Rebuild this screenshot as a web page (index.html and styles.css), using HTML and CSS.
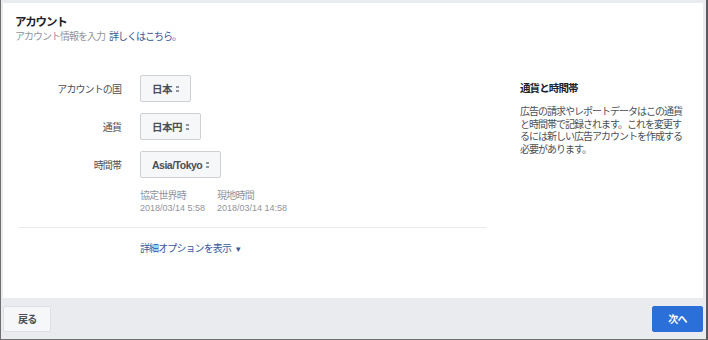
FILE: index.html
```html
<!DOCTYPE html>
<html>
<head>
    <link rel="stylesheet" href="styles.css">
</head>
<body>
    <div class="window">
        <div class="panel">
            <div class="header">
                <h1>アカウント</h1>
                <p class="sub">アカウント情報を入力<a href="#">詳しくはこちら。</a></p>
            </div>
            <div class="main">
                <div class="form">
                    <div class="row">
                        <span class="label">アカウントの国</span>
                        <button class="select">日本<span class="caret"></span></button>
                    </div>
                    <div class="row">
                        <span class="label">通貨</span>
                        <button class="select">日本円<span class="caret"></span></button>
                    </div>
                    <div class="row">
                        <span class="label">時間帯</span>
                        <button class="select">Asia/Tokyo<span class="caret"></span></button>
                    </div>
                    <div class="times">
                        <div class="time">
                            <div class="time-label">協定世界時</div>
                            <div>2018/03/14 5:58</div>
                        </div>
                        <div class="time">
                            <div class="time-label">現地時間</div>
                            <div>2018/03/14 14:58</div>
                        </div>
                    </div>
                    <div class="divider"></div>
                    <a class="more" href="#">詳細オプションを表示<span class="down">▾</span></a>
                </div>
                <div class="aside">
                    <h2>通貨と時間帯</h2>
                    <p>広告の請求やレポートデータはこの通貨と時間帯で記録されます。これを変更するには新しい広告アカウントを作成する必要があります。</p>
                </div>
            </div>
        </div>
        <div class="footer">
            <button class="btn">戻る</button>
            <button class="btn primary">次へ</button>
        </div>
    </div>
</body>
</html>
```

FILE: styles.css
```css
body {
    margin: 0;
    font-family: "Noto Sans CJK JP", "Liberation Sans", sans-serif;
    color: #1d2129;
}
.window {
    height: 340px;
    box-sizing: border-box;
    background-color: #e9ebee;
    border-left: 1px solid #6f6f6f;
    border-right: 2px solid #5a5a5a;
    border-bottom: 1px solid #6f6f6f;
    display: flex;
    flex-direction: column;
}
.panel {
    flex: 1;
    background-color: #fff;
    margin: 3px 3px 0 2px;
}
.header {
    padding: 10px 0 0 12px;
}
h1 {
    margin: 0;
    font-size: 11.5px;
    font-weight: bold;
    letter-spacing: -1.2px;
    line-height: 16px;
}
.sub {
    margin: 0;
    font-size: 10px;
    letter-spacing: -1px;
    line-height: 14px;
    color: #90949c;
}
.sub a {
    margin-left: 4px;
}
a {
    color: #365899;
    text-decoration: none;
}
.main {
    display: flex;
    padding: 32px 0 0 15px;
}
.form {
    width: 469px;
}
.row {
    display: flex;
    align-items: center;
    margin-bottom: 11px;
}
.label {
    width: 103px;
    text-align: right;
    margin-right: 19px;
    font-size: 10px;
    letter-spacing: -0.9px;
    color: #4b4f56;
}
.select {
    height: 27px;
    padding: 0 11px;
    background-color: #f6f7f9;
    border: 1px solid #ced0d4;
    border-radius: 2px;
    font-family: "Liberation Sans", "Noto Sans CJK JP", sans-serif;
    font-size: 10.5px;
    font-weight: bold;
    letter-spacing: -0.5px;
    color: #4b4f56;
    display: flex;
    align-items: center;
}
.caret {
    display: inline-block;
    width: 3px;
    height: 6px;
    margin-left: 4px;
    background:
        linear-gradient(to bottom, #90949c 0 40%, transparent 40% 60%, #90949c 60% 100%);
}
.times {
    display: flex;
    margin: 1px 0 0 122px;
    font-family: "Liberation Sans", "Noto Sans CJK JP", sans-serif;
    font-size: 9px;
    line-height: 13px;
    color: #90949c;
}
.time {
    margin-right: 12px;
}
.time-label {
    font-size: 10px;
    letter-spacing: -0.8px;
}
.divider {
    height: 1px;
    background-color: #e9ebee;
    margin-top: 12px;
}
.more {
    display: block;
    margin: 13px 0 0 122px;
    font-size: 10px;
    letter-spacing: -0.9px;
    line-height: 14px;
}
.down {
    margin-left: 5px;
    font-size: 9px;
    letter-spacing: 0;
}
.aside {
    margin-left: 33px;
    width: 168px;
    padding-top: 6px;
}
h2 {
    margin: 0 0 10px;
    font-size: 10.5px;
    font-weight: bold;
    letter-spacing: -0.9px;
    line-height: 14px;
    color: #1d2129;
}
.aside p {
    margin: 0;
    font-size: 10px;
    letter-spacing: -1px;
    line-height: 12.5px;
    color: #4b4f56;
}
.footer {
    height: 41px;
    display: flex;
    justify-content: space-between;
    align-items: center;
    padding: 0 3px 0 2px;
}
.btn {
    height: 26px;
    padding: 0 14px;
    background-color: #f6f7f9;
    border: 1px solid #dddfe2;
    border-radius: 2px;
    font-family: "Noto Sans CJK JP", sans-serif;
    font-size: 10px;
    font-weight: bold;
    letter-spacing: -0.8px;
    color: #4b4f56;
}
.primary {
    width: 51px;
    background-color: #2b6fd8;
    border-color: #2b6fd8;
    color: #fff;
}
```
